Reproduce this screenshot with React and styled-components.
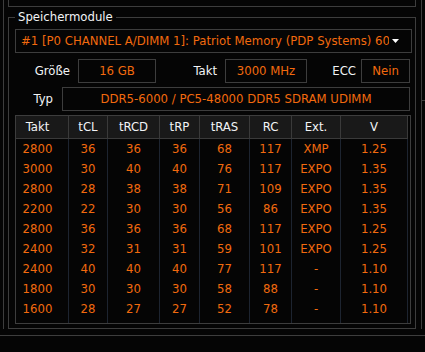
import React from "react";
import styled, { createGlobalStyle } from "styled-components";

const LINE = "#3d3d3d";
const ORANGE = "#f26a0e";
const WHITE = "#f2f4f6";

const Global = createGlobalStyle`
  html, body { margin: 0; padding: 0; background: #050505; }
  body { font-family: "DejaVu Sans Condensed", "Liberation Sans", sans-serif; font-size: 13px; }
  * { box-sizing: border-box; }
`;

const Page = styled.div`
  width: 425px;
  height: 352px;
  overflow: hidden;
  background: #050505;
  display: flex;
  flex-direction: column;
`;

const Main = styled.div`
  height: 335px;
  display: flex;
  align-items: flex-start;
`;

const Panel = styled.div`
  margin-left: 3px;
  width: 419px;
  height: 329px;
  border-left: 1px solid ${LINE};
  border-right: 1px solid ${LINE};
  padding: 0 5px 0 4px;
  display: flex;
  flex-direction: column;
`;

const TopBox = styled.div`
  height: 7px;
  border: 1px solid ${LINE};
  border-top: none;
`;

const Group = styled.fieldset`
  margin: 2px 0 0;
  min-width: 0;
  flex: 1;
  border: 1px solid ${LINE};
  padding: 4px 3px 4px 6px;
  display: flex;
  flex-direction: column;
`;

const Legend = styled.legend`
  padding: 0 3px;
  color: ${WHITE};
  font-size: 13px;
  line-height: 16px;
`;

const Content = styled.div`
  flex: 1;
  display: flex;
  flex-direction: column;
`;

const Select = styled.div`
  height: 24px;
  border: 1px solid ${LINE};
  display: flex;
  align-items: center;
  padding: 0 12px 0 5px;
  margin-bottom: 6px;
`;

const SelectText = styled.span`
  flex: 1;
  min-width: 0;
  overflow: hidden;
  white-space: nowrap;
  color: ${ORANGE};
  line-height: 22px;
`;

const Arrow = styled.svg`
  margin-left: 3px;
  flex: none;
`;

const FieldRow = styled.div`
  display: grid;
  grid-template-columns: ${(p) => p.$cols};
  height: 24px;
  margin-bottom: 4px;
`;

const Label = styled.div`
  color: ${WHITE};
  text-align: right;
  padding-right: ${(p) => p.$pad}px;
  line-height: 24px;
  white-space: nowrap;
`;

const Value = styled.div`
  border: 1px solid ${LINE};
  color: ${ORANGE};
  text-align: center;
  line-height: 22px;
  white-space: nowrap;
  overflow: hidden;
`;

const Table = styled.div`
  width: 396px;
  height: 209px;
  border: 1px solid ${LINE};
  padding-right: 2px;
  display: grid;
  grid-template-columns: 53px 39px 52px 40px 50px 42px 49px 67px;
  grid-template-rows: 23px repeat(9, 20px) 1fr;
`;

const HeadCell = styled.div`
  background: #191919;
  border-right: 1px solid #3a3a3a;
  border-bottom: 1px solid #3a3a3a;
  color: ${WHITE};
  text-align: center;
  line-height: 22px;
  padding-right: ${(p) => (p.$first ? 9 : 0)}px;
`;

const Cell = styled.div`
  border-right: 1px solid #1d2430;
  color: ${ORANGE};
  text-align: center;
  line-height: 20px;
  padding-right: ${(p) => (p.$first ? 9 : 0)}px;
  white-space: nowrap;
`;

const Strip = styled.div`
  flex: 1;
  align-self: stretch;
  margin-top: 100px;
  border-top: 1px solid ${LINE};
`;

const Bottom = styled.div`
  flex: 1;
  border-top: 1px solid ${LINE};
`;

const headers = ["Takt", "tCL", "tRCD", "tRP", "tRAS", "RC", "Ext.", "V"];
const rows = [
  ["2800", "36", "36", "36", "68", "117", "XMP", "1.25"],
  ["3000", "30", "40", "40", "76", "117", "EXPO", "1.35"],
  ["2800", "28", "38", "38", "71", "109", "EXPO", "1.35"],
  ["2200", "22", "30", "30", "56", "86", "EXPO", "1.35"],
  ["2800", "36", "36", "36", "68", "117", "EXPO", "1.25"],
  ["2400", "32", "31", "31", "59", "101", "EXPO", "1.25"],
  ["2400", "40", "40", "40", "77", "117", "-", "1.10"],
  ["1800", "30", "30", "30", "58", "88", "-", "1.10"],
  ["1600", "28", "27", "27", "52", "78", "-", "1.10"],
];

export default function App() {
  return (
    <>
      <Global />
      <Page>
        <Main>
          <Panel>
            <TopBox />
            <Group>
              <Legend>Speichermodule</Legend>
              <Content>
                <Select>
                  <SelectText>
                    #1 [P0 CHANNEL A/DIMM 1]: Patriot Memory (PDP Systems) 6000 MHz
                  </SelectText>
                  <Arrow width="7" height="4" viewBox="0 0 7 4">
                    <path d="M0 0H7L3.5 4Z" fill="#ffffff" />
                  </Arrow>
                </Select>
                <FieldRow $cols="63px 78px 69px 82px 54px 49px">
                  <Label $pad={8}>Größe</Label>
                  <Value>16 GB</Value>
                  <Label $pad={8}>Takt</Label>
                  <Value>3000 MHz</Value>
                  <Label $pad={5}>ECC</Label>
                  <Value>Nein</Value>
                </FieldRow>
                <FieldRow $cols="47px 348px">
                  <Label $pad={9}>Typ</Label>
                  <Value>DDR5-6000 / PC5-48000 DDR5 SDRAM UDIMM</Value>
                </FieldRow>
                <Table>
                  {headers.map((h, i) => (
                    <HeadCell key={h} $first={i === 0}>
                      {h}
                    </HeadCell>
                  ))}
                  {rows.map((r, ri) =>
                    r.map((v, ci) => (
                      <Cell key={ri + "-" + ci} $first={ci === 0}>
                        {v}
                      </Cell>
                    ))
                  )}
                  {headers.map((h) => (
                    <Cell key={"f" + h} />
                  ))}
                </Table>
              </Content>
            </Group>
          </Panel>
          <Strip />
        </Main>
        <Bottom />
      </Page>
    </>
  );
}
